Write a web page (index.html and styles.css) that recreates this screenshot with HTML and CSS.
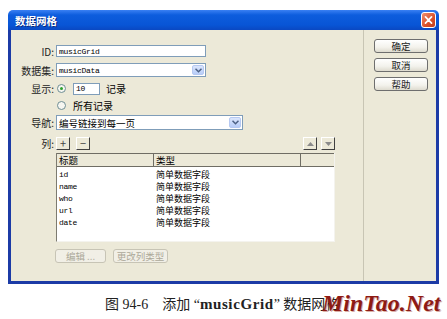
FILE: index.html
```html
<!DOCTYPE html>
<html lang="zh-CN">
<head>
    <meta charset="UTF-8">
    <title>数据网格</title>
    <link rel="stylesheet" href="styles.css">
</head>
<body>
    <div class="dialog">
        <div class="titlebar">
            <span class="title">数据网格</span>
            <span class="close">
                <svg width="15" height="16" viewBox="0 0 15 16">
                    <path d="M4 4.5 L11 11.5 M11 4.5 L4 11.5" stroke="#fff" stroke-width="2" stroke-linecap="round"/>
                </svg>
            </span>
        </div>
        <div class="body">
            <div class="main">
                <div class="row row-id">
                    <span class="label">ID:</span>
                    <div class="field field-id">musicGrid</div>
                </div>
                <div class="row row-data">
                    <span class="label">数据集:</span>
                    <div class="field select select-data">
                        <span>musicData</span>
                        <span class="arrow">
                            <svg width="7" height="5" viewBox="0 0 7 5"><path d="M0.5 0.8 L3.5 3.8 L6.5 0.8" fill="none" stroke="#4d6185" stroke-width="1.5"/></svg>
                        </span>
                    </div>
                </div>
                <div class="row row-show">
                    <span class="label">显示:</span>
                    <span class="radio checked"></span>
                    <div class="field field-num">10</div>
                    <span class="unit">记录</span>
                </div>
                <div class="row row-all">
                    <span class="label"></span>
                    <span class="radio"></span>
                    <span class="radio-text">所有记录</span>
                </div>
                <div class="row row-nav">
                    <span class="label">导航:</span>
                    <div class="field select select-nav">
                        <span class="cjk">编号链接到每一页</span>
                        <span class="arrow">
                            <svg width="7" height="5" viewBox="0 0 7 5"><path d="M0.5 0.8 L3.5 3.8 L6.5 0.8" fill="none" stroke="#4d6185" stroke-width="1.5"/></svg>
                        </span>
                    </div>
                </div>
                <div class="row row-cols">
                    <span class="label">列:</span>
                    <div class="col-tools">
                        <span class="tool">+</span>
                        <span class="tool">−</span>
                        <span class="spacer"></span>
                        <span class="tool">
                            <svg width="7" height="4" viewBox="0 0 7 4"><path d="M0 4 L3.5 0 L7 4 Z" fill="#8a8a8a"/></svg>
                        </span>
                        <span class="tool">
                            <svg width="7" height="4" viewBox="0 0 7 4"><path d="M0 0 L3.5 4 L7 0 Z" fill="#8a8a8a"/></svg>
                        </span>
                    </div>
                </div>
                <div class="grid">
                    <div class="grid-head">
                        <span class="c1">标题</span>
                        <span class="c2">类型</span>
                        <span class="c3"></span>
                    </div>
                    <div class="grid-row"><span class="c1 name">id</span><span class="c2">简单数据字段</span></div>
                    <div class="grid-row"><span class="c1 name">name</span><span class="c2">简单数据字段</span></div>
                    <div class="grid-row"><span class="c1 name">who</span><span class="c2">简单数据字段</span></div>
                    <div class="grid-row"><span class="c1 name">url</span><span class="c2">简单数据字段</span></div>
                    <div class="grid-row"><span class="c1 name">date</span><span class="c2">简单数据字段</span></div>
                </div>
                <div class="row row-edit">
                    <span class="btn btn-off btn-edit">编辑 ...</span>
                    <span class="btn btn-off btn-type">更改列类型</span>
                </div>
            </div>
            <div class="side">
                <span class="btn">确定</span>
                <span class="btn">取消</span>
                <span class="btn">帮助</span>
            </div>
        </div>
    </div>
    <div class="caption">
        图 94-6　添加 “<b>musicGrid</b>” 数据网格
        <span class="logo">MinTao.Net</span>
    </div>
</body>
</html>
```

FILE: styles.css
```css
body {
    margin: 0;
    width: 447px;
    height: 319px;
    overflow: hidden;
    background: #fff;
    font-family: "Noto Sans CJK SC", sans-serif;
    font-size: 10px;
    color: #000;
}
.dialog {
    width: 431px;
    margin: 10px 0 0 8px;
}
.titlebar {
    height: 20px;
    box-sizing: border-box;
    padding: 0 3px 0 7px;
    display: flex;
    align-items: center;
    justify-content: space-between;
    background: linear-gradient(#3a80f3, #0d5ddd 25%, #0855d6 75%, #0a48c2);
    border-radius: 5px 5px 0 0;
}
.title {
    color: #fff;
    font-weight: bold;
    font-size: 10.5px;
    text-shadow: 1px 1px 0 #0a2a80;
}
.close {
    width: 15px;
    height: 16px;
    display: flex;
    background: linear-gradient(135deg, #f09070, #d9502a 60%, #c04020);
    border: 1px solid #fff;
    border-radius: 3px;
    box-sizing: border-box;
    align-items: center;
    justify-content: center;
}
.close svg {
    width: 13px;
    height: 14px;
}
.body {
    height: 254px;
    display: flex;
    box-sizing: border-box;
    background: #ece9d8;
    border: 3px solid #1c3ba6;
    border-top: none;
}
.main {
    width: 353px;
    box-sizing: border-box;
    padding-top: 15px;
    border-right: 1px solid #c8c5b4;
}
.side {
    flex: 1;
    padding: 9px 0 0 10px;
    display: flex;
    flex-direction: column;
    gap: 5px;
}
.row {
    display: flex;
    align-items: center;
}
.label {
    width: 43px;
    margin-right: 2px;
    text-align: right;
    flex-shrink: 0;
    color: #222;
}
.row-id { height: 12px; }
.row-data { height: 14px; margin-top: 6px; }
.row-show { height: 13px; margin-top: 5px; }
.row-all { height: 14px; margin-top: 3px; }
.row-nav { height: 15px; margin-top: 3px; }
.row-cols { height: 13px; margin-top: 7px; }
.row-edit { height: 14px; margin-top: 7px; padding-left: 44px; gap: 7px; }

.field {
    height: 100%;
    box-sizing: border-box;
    border: 1px solid #7f9db9;
    background: #fff;
    padding-left: 2px;
    display: flex;
    align-items: center;
    font-family: "Liberation Mono", monospace;
    font-size: 8px;
    letter-spacing: -0.3px;
}
.field-id { width: 150px; }
.field-num { width: 27px; height: 12px; margin-left: 7px; }
.select {
    justify-content: space-between;
    padding-right: 1px;
}
.select-data { width: 150px; }
.select-nav { width: 187px; }
.select .cjk {
    font-family: "Noto Sans CJK SC", sans-serif;
    font-size: 9.5px;
    letter-spacing: 0;
}
.arrow {
    width: 12px;
    height: calc(100% - 2px);
    display: flex;
    align-items: center;
    justify-content: center;
    background: linear-gradient(#dbe6fd, #b8cdf8);
    border: 1px solid #b6c9f2;
    border-radius: 2px;
    box-sizing: border-box;
}
.unit { margin-left: 6px; }
.radio {
    width: 9px;
    height: 9px;
    box-sizing: border-box;
    border: 1px solid #6f8e94;
    border-radius: 50%;
    background: #f6f6f1;
    display: flex;
    align-items: center;
    justify-content: center;
    margin-left: 1px;
}
.radio.checked::after {
    content: "";
    width: 3px;
    height: 3px;
    border-radius: 50%;
    background: #2ea12e;
}
.radio-text { margin-left: 7px; }

.col-tools {
    width: 279px;
    height: 13px;
    display: flex;
    gap: 6px;
}
.col-tools .spacer { flex: 1; }
.tool {
    width: 14px;
    height: 13px;
    box-sizing: border-box;
    display: flex;
    align-items: center;
    justify-content: center;
    border: 1px solid;
    border-color: #fff #404040 #404040 #fff;
    background: #ece9d8;
    font-size: 11px;
    line-height: 1;
    color: #444;
}
.col-tools .tool:nth-child(4) { margin-right: -2px; }

.grid {
    width: 279px;
    height: 89px;
    margin: 3px 0 0 45px;
    box-sizing: border-box;
    background: #fff;
    border-left: 1px solid #7d7b70;
    border-right: 1px solid #f4f3ee;
    border-bottom: 1px solid #f4f3ee;
}
.grid-head {
    height: 14px;
    box-sizing: border-box;
    display: flex;
    background: #ece9d8;
    border-top: 1px solid #6f6d64;
    border-bottom: 1px solid #6f6d64;
    margin-bottom: 1px;
    font-size: 9.5px;
}
.grid-head span {
    display: flex;
    align-items: center;
    padding-left: 2px;
    box-sizing: border-box;
}
.grid-head .c1 { width: 97px; border-right: 1px solid #6f6d64; }
.grid-head .c2 { width: 147px; border-right: 1px solid #6f6d64; }
.grid-head .c3 { flex: 1; }
.grid-row {
    height: 12px;
    display: flex;
    align-items: center;
    font-size: 9px;
}
.grid-row .c1 { width: 97px; padding-left: 2px; box-sizing: border-box; }
.grid-row .c2 { padding-left: 2px; }
.name {
    font-family: "Liberation Mono", monospace;
    font-size: 8px;
    letter-spacing: -0.3px;
}

.btn {
    width: 54px;
    height: 14px;
    box-sizing: border-box;
    display: flex;
    align-items: center;
    justify-content: center;
    border: 1px solid #6e6e6e;
    border-radius: 3px;
    background: linear-gradient(#ffffff, #f3f2ec 60%, #dedbcf);
    font-size: 9.5px;
    color: #222;
}
.btn-off {
    border-color: #c7c4b5;
    background: #f1efe6;
    color: #aca899;
}
.btn-edit { width: 51px; }
.btn-type { width: 55px; }

.caption {
    position: relative;
    margin-top: 10px;
    padding-left: 105px;
    height: 20px;
    line-height: 20px;
    font-family: "Liberation Serif", "Noto Sans CJK SC", serif;
    font-size: 14px;
    color: #222;
}
.caption b {
    font-weight: bold;
    font-size: 15px;
    letter-spacing: 0.6px;
}
.logo {
    position: absolute;
    left: 322px;
    top: -6px;
    font-family: "Liberation Serif", serif;
    font-weight: bold;
    font-style: italic;
    font-size: 24px;
    line-height: 30px;
    color: #8e1a14;
    text-shadow: 1px 1px 0 #d9b0a8;
}
```
